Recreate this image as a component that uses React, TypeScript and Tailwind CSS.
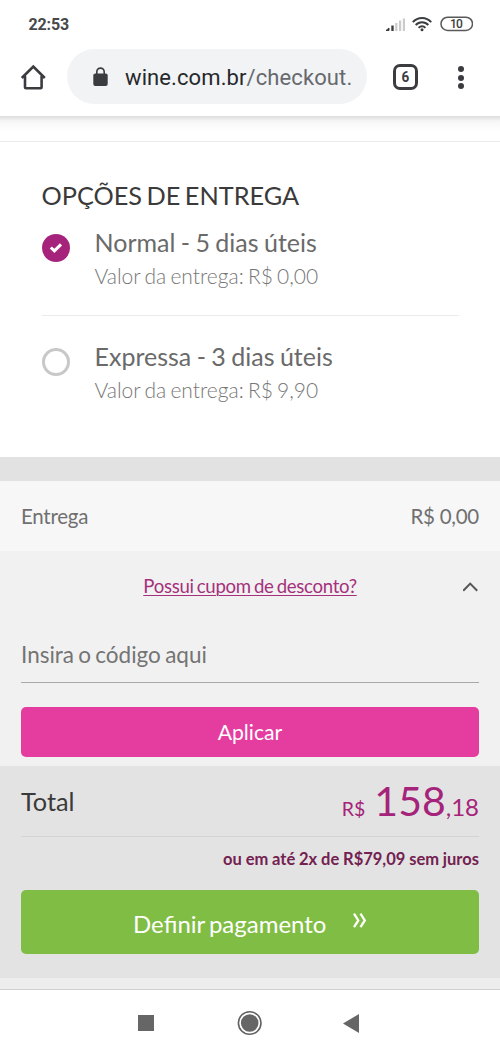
import React from 'react';

function StatusBar() {
  return (
    <div className="flex h-[49px] items-start pl-[28.5px] pr-[27px] font-['Roboto',sans-serif]">
      <span className="mt-[15px] text-[16px] leading-[20px] font-bold tracking-[-0.15px] text-[#47484a]">22:53</span>
      <svg className="mt-[15px] ml-auto" width="88" height="18" viewBox="0 0 88 18" fill="none">
        <path d="M1 15.5 L4 13 V15.5 Z" fill="#3d3e40" stroke="#3d3e40" />
        <path d="M7.5 16V10.5" stroke="#3d3e40" strokeWidth="2.4" />
        <path d="M11.3 16V8M15.1 16V5.5M18.9 16V3.5" stroke="#cbcbcb" strokeWidth="2.2" />
        <path d="M27.8 7.1a12.2 12.2 0 0 1 18.4 0M30.7 10a8.4 8.4 0 0 1 12.6 0M33.6 12.8a4.6 4.6 0 0 1 6.8 0" stroke="#3d3e40" strokeWidth="2" />
        <circle cx="37" cy="14.8" r="1.5" fill="#3d3e40" />
        <rect x="56" y="2.2" width="31.5" height="13.3" rx="6.6" stroke="#58595b" strokeWidth="1.5" />
        <text x="71" y="13" textAnchor="middle" fontFamily="Roboto" fontSize="12" fontWeight="500" fill="#3d3e40" letterSpacing="-0.9">10</text>
      </svg>
    </div>
  );
}

function Toolbar() {
  return (
    <div className="flex h-[67px] items-start pl-[20px] pr-[36px] font-['Roboto',sans-serif]">
      <svg className="mt-[15px]" width="27" height="27" viewBox="0 0 27 27" fill="none" stroke="#3b3c3f" strokeWidth="2.6">
        <path d="M1.8 14 L13.3 2.5 L24.8 14" />
        <path d="M5 12V23.3a1 1 0 0 0 1 1H20.6a1 1 0 0 0 1-1V12" />
      </svg>
      <div className="ml-[20px] flex h-[55px] w-[300px] items-center rounded-full bg-[#f1f3f5] pl-[26px]">
        <svg width="15" height="20" viewBox="0 0 15 20" fill="none">
          <rect x="0.3" y="6.5" width="14.4" height="12.5" rx="2" fill="#3b3c3f" />
          <path d="M3.8 8V4.8a3.7 3.7 0 0 1 7.4 0V8" stroke="#3b3c3f" strokeWidth="1.6" />
        </svg>
        <span className="ml-[17px] pt-[2px] whitespace-nowrap text-[22px] leading-[30px] tracking-[0.1px] text-[#27282b]">
          wine.com.br<span className="text-[#67696d]">/checkout.</span>
        </span>
      </div>
      <div className="mt-[15px] ml-[26px] flex h-[26px] w-[25px] items-center justify-center rounded-[7px] border-[3px] border-[#3b3c3f] text-[#3b3c3f]">
        <span className="scale-x-90 text-[15px] leading-[16px] font-bold">6</span>
      </div>
      <div className="mt-[17px] ml-auto flex w-[6px] flex-col gap-[2.6px]">
        <i className="size-[6px] rounded-full bg-[#3b3c3f]" />
        <i className="size-[6px] rounded-full bg-[#3b3c3f]" />
        <i className="size-[6px] rounded-full bg-[#3b3c3f]" />
      </div>
    </div>
  );
}

function Option({ label, price, checked }: { label: string; price: string; checked?: boolean }) {
  return (
    <div className="flex">
      {checked ? (
        <span className="mt-[6px] flex size-[28px] shrink-0 items-center justify-center rounded-full bg-[#a5237a]">
          <svg width="14" height="12" viewBox="0 0 14 12" fill="none" stroke="#fff" strokeWidth="3">
            <path d="M1.8 5.5 L5.4 8.9 L12 2.4" />
          </svg>
        </span>
      ) : (
        <span className="mt-[6px] size-[28px] shrink-0 rounded-full border-[3px] border-[#c8c8c8]" />
      )}
      <div className="ml-[25px] whitespace-nowrap">
        <div className="text-[25px] leading-[28px] [word-spacing:-1px] text-[#6a6a6a]">{label}</div>
        <div className="mt-[5px] text-[21px] leading-[30px] font-light [word-spacing:-1.5px] text-[#777]">{price}</div>
      </div>
    </div>
  );
}

export default function App() {
  return (
    <div className="flex h-[1056px] w-[500px] flex-col overflow-hidden bg-white font-['Lato',sans-serif]">
      <StatusBar />
      <Toolbar />
      <div className="h-[25px] bg-linear-to-b from-[#dcdcdc] via-[#f6f6f6] via-20% to-white to-60%" />
      <section className="h-[316px] border-t border-[#ececec] px-[41.5px] pt-[38px]">
        <h2 className="text-[25.3px] leading-[30px] whitespace-nowrap [word-spacing:-2px] text-[#3a3a3a]">OPÇÕES DE ENTREGA</h2>
        <div className="mt-[18px]">
          <Option label="Normal - 5 dias úteis" price="Valor da entrega: R$ 0,00" checked />
        </div>
        <div className="mt-[24px] mb-[26px] h-px bg-[#ebebeb]" />
        <Option label="Expressa - 3 dias úteis" price="Valor da entrega: R$ 9,90" />
      </section>
      <div className="h-[24px] bg-[#e2e2e2]" />
      <div className="flex h-[70px] items-center justify-between bg-[#f7f7f7] px-[21px] text-[20.5px] leading-[30px] tracking-[-0.25px] text-[#707070]">
        <span>Entrega</span>
        <span>R$ 0,00</span>
      </div>
      <section className="h-[215px] bg-[#f1f1f1] px-[21px] pt-[20px]">
        <div className="flex h-[30px] items-center">
          <span className="w-[16px]" />
          <a className="flex-1 text-center text-[18.6px] leading-[30px] tracking-[-0.3px] whitespace-nowrap text-[#a5307c] underline decoration-1 underline-offset-[2px] [word-spacing:-1.3px]">Possui cupom de desconto?</a>
          <svg className="mt-[2px]" width="16" height="10" viewBox="0 0 16 10" fill="none" stroke="#555" strokeWidth="2">
            <path d="M0.2 8.8 L7.2 1.6 L14.2 8.8" />
          </svg>
        </div>
        <div className="mt-[38px] h-[44px] border-b border-[#a9a9a9] text-[22.5px] leading-[31px] [word-spacing:-1.5px] text-[#747474]">Insira o código aqui</div>
        <div className="mt-[23.5px] flex h-[50px] items-center justify-center rounded-[5px] bg-[#e53c9f] text-[21.2px] leading-[30px] text-white">Aplicar</div>
      </section>
      <section className="h-[212px] bg-[#e3e3e3] px-[21px]">
        <div className="flex h-[71px] items-baseline justify-between border-b border-[#d3d3d3]">
          <span className="text-[25.3px] leading-[70px] text-[#3a3a3a]">Total</span>
          <span className="relative top-[5px] leading-[50px] text-[#a5237a]">
            <span className="text-[19.5px]">R$</span>
            <span className="ml-[9px] text-[41px]">158</span>
            <span className="text-[24px]">,18</span>
          </span>
        </div>
        <div className="mt-[7px] text-right text-[16.5px] leading-[30px] font-bold whitespace-nowrap [word-spacing:-0.2px] text-[#722150]">ou em até 2x de R$79,09 sem juros</div>
        <div className="mt-[16px] flex h-[64px] items-center rounded-[5px] bg-[#80bd44] pl-[112px] text-[24px] leading-[30px] text-white">
          <span className="pt-[4px] [word-spacing:-2px]">Definir pagamento</span>
          <svg className="mb-[3px] ml-[27px]" width="14" height="15" viewBox="0 0 14 15" fill="none" stroke="#fff" strokeWidth="2.3">
            <path d="M1 0.7 L5.3 7.4 L1 14.1M7.5 0.7 L11.8 7.4 L7.5 14.1" />
          </svg>
        </div>
      </section>
      <div className="h-[12px] border-b border-[#cfcfcf] bg-[#ededed]" />
      <nav className="flex h-[66px] items-center pl-[138px]">
        <i className="size-[16px] bg-[#666]" />
        <svg className="ml-[83px]" width="26" height="26" viewBox="0 0 26 26" fill="none">
          <circle cx="12.7" cy="13" r="11.3" stroke="#606060" strokeWidth="1.6" />
          <circle cx="12.7" cy="13" r="8.8" fill="#666" />
        </svg>
        <svg className="ml-[80px]" width="16" height="19" viewBox="0 0 16 19" fill="#666">
          <path d="M0 9.5 L16 0 V19 Z" />
        </svg>
      </nav>
    </div>
  );
}
